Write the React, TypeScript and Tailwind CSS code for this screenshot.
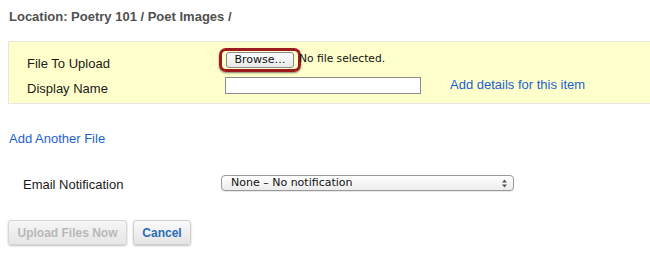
export default function App() {
  const dv = { fontFamily: '"DejaVu Sans", sans-serif' };
  return (
    <div className="w-[650px] h-[268px] bg-white overflow-hidden" style={{ fontFamily: '"Liberation Sans", Arial, sans-serif' }}>
      <div className="pt-[9px] pl-[9px] text-[13px] font-bold text-[#505050] leading-[16px]">Location: Poetry 101 / Poet Images /</div>
      <div className="mt-[16px] ml-[8px] h-[63px] bg-[#ffffcc] border border-r-0 border-[#e6e6e0] flex flex-col pt-[6px]">
        <div className="flex items-start h-[24px]">
          <div className="w-[210px] pl-[18px] pt-[8px] text-[13px] text-[#1a1a1a] leading-[16px]">File To Upload</div>
          <div className="h-[24px] rounded-[7px] border-[3px] border-[#9b1b1f] shadow-[0_1px_2px_rgba(0,0,0,0.5)] px-[4px] py-[1px] flex">
            <div className="w-[68px] h-[16px] rounded-[3px] border border-[#8a8a8a] bg-gradient-to-b from-white to-[#e8e8e8] flex items-center justify-center text-[11px] text-[#111]" style={dv}>Browse…</div>
          </div>
          <div className="ml-[-2px] pt-[4px] text-[10.7px] text-[#111] leading-[14px]" style={dv}>No file selected.</div>
        </div>
        <div className="mt-[5px] flex items-start">
          <div className="w-[210px] pl-[18px] pt-[4px] text-[13px] text-[#1a1a1a] leading-[16px]">Display Name</div>
          <div className="ml-[6px] w-[196px] h-[17px] border border-[#8c8c8c] bg-white" />
          <div className="ml-[29px] text-[13px] text-[#1c5fd6] leading-[16px]">Add details for this item</div>
        </div>
      </div>
      <div className="mt-[27px] ml-[9px] text-[13px] text-[#1c5fd6] leading-[16px]">Add Another File</div>
      <div className="mt-[28px] flex items-start">
        <div className="ml-[23px] w-[198px] text-[13px] text-[#1a1a1a] leading-[16px] pt-[2px]">Email Notification</div>
        <div className="w-[293px] h-[16px] rounded-[4px] border border-[#9a9a9a] bg-gradient-to-b from-white to-[#ececec] flex items-center justify-between pl-[9px] pr-[6px] shadow-[0_1px_1px_rgba(0,0,0,0.1)]">
          <span className="text-[11px] text-[#111] leading-[14px]" style={dv}>None – No notification</span>
          <svg width="5" height="9" viewBox="0 0 5 9"><path d="M0 3.5 L2.5 0.5 L5 3.5Z M0 5.5 L2.5 8.5 L5 5.5Z" fill="#555" /></svg>
        </div>
      </div>
      <div className="mt-[27px] ml-[8px] flex gap-[6px]">
        <div className="w-[119px] h-[25px] rounded-[3px] border border-[#d6d6d6] bg-gradient-to-b from-[#f6f6f6] to-[#e6e6e6] shadow-[0_1px_2px_rgba(0,0,0,0.25)] flex items-center justify-center text-[12px] font-bold text-[#b8b8b8]">Upload Files Now</div>
        <div className="w-[58px] h-[25px] rounded-[3px] border border-[#cfcfcf] bg-gradient-to-b from-[#fafafa] to-[#e4e4e4] shadow-[0_1px_2px_rgba(0,0,0,0.25)] flex items-center justify-center text-[12px] font-bold text-[#2a6db5]">Cancel</div>
      </div>
    </div>
  );
}
